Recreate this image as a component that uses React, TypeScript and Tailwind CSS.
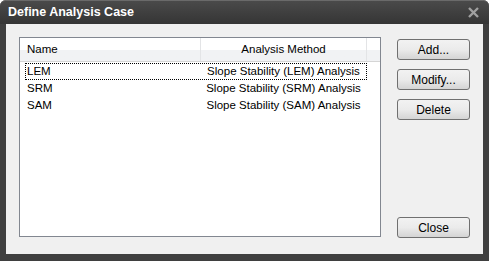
import React from 'react'

const rows = [
  { name: 'LEM', method: 'Slope Stability (LEM) Analysis' },
  { name: 'SRM', method: 'Slope Stability (SRM) Analysis' },
  { name: 'SAM', method: 'Slope Stability (SAM) Analysis' },
]

function Btn({ label, className = '' }: { label: string; className?: string }) {
  return (
    <button
      className={
        'w-[73px] h-[21px] rounded-[3px] border border-[#707070] bg-gradient-to-b from-[#f2f2f2] via-[#ebebeb] to-[#d4d4d4] text-[12px] text-black leading-none ' +
        className
      }
    >
      {label}
    </button>
  )
}

export default function App() {
  return (
    <div
      className="w-[489px] h-[261px] bg-[#3f3f3f] flex flex-col rounded-t-[6px]"
      style={{ fontFamily: '"Liberation Sans", Arial, sans-serif' }}
    >
      {/* title bar */}
      <div className="h-[24px] flex items-center justify-between pl-[8px] pr-[10px] rounded-t-[6px] bg-gradient-to-b from-[#4a4a4a] to-[#353535] border-t border-[#6a6a6a]">
        <span className="text-white font-bold text-[12.5px]">Define Analysis Case</span>
        <svg width="11" height="11" viewBox="0 0 11 11">
          <path d="M1 1 L10 10 M10 1 L1 10" stroke="#a0a0a0" strokeWidth="2.4" />
        </svg>
      </div>

      {/* body */}
      <div className="flex-1 mx-[6px] mb-[7px] bg-[#f0f0f0] flex pt-[13px] pl-[13px] pr-[13px] pb-[16px]">
        {/* list */}
        <div className="w-[362px] h-[200px] border border-[#828790] bg-white flex flex-col">
          <div className="h-[24px] flex bg-gradient-to-b from-white from-50% to-[#f1f2f4] to-50% border-b border-[#d5d5d5] text-[11.5px] text-black">
            <div className="w-[181px] flex items-center pl-[7px] border-r border-[#e3e4e6]">Name</div>
            <div className="w-[166px] flex items-center justify-center border-r border-[#e3e4e6]">Analysis Method</div>
            <div className="flex-1" />
          </div>
          <div className="flex flex-col pt-[1px] pl-[5px] text-[11.5px] text-black">
            {rows.map((r, i) => (
              <div
                key={r.name}
                className={
                  'h-[17px] w-[342px] flex items-center ' +
                  (i === 0 ? 'border border-dotted border-black' : 'border border-transparent')
                }
              >
                <span className="w-[175px] pl-[1px]">{r.name}</span>
                <span className="flex-1 text-center">{r.method}</span>
              </div>
            ))}
          </div>
        </div>

        {/* buttons */}
        <div className="ml-auto flex flex-col gap-[9px] pt-[2px]">
          <Btn label="Add..." />
          <Btn label="Modify..." />
          <Btn label="Delete" />
          <Btn label="Close" className="mt-auto" />
        </div>
      </div>
    </div>
  )
}
